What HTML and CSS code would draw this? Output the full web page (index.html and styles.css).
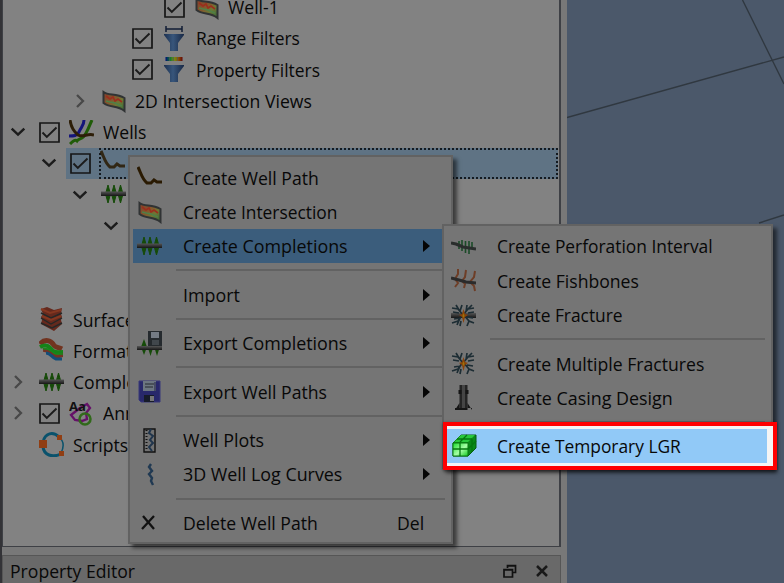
FILE: index.html
```html
<!DOCTYPE html>
<html lang="en">
<head>
<meta charset="utf-8">
<title>Well path menu</title>
<link rel="stylesheet" href="styles.css">
</head>
<body>
<svg class="defs" width="0" height="0">
  <defs>
    <linearGradient id="fun"><stop offset="0" stop-color="#1c3050"/><stop offset=".45" stop-color="#38567b"/><stop offset="1" stop-color="#172744"/></linearGradient>
    <linearGradient id="rain"><stop offset="0" stop-color="#000d77"/><stop offset=".25" stop-color="#087038"/><stop offset=".5" stop-color="#739014"/><stop offset=".75" stop-color="#8b5207"/><stop offset="1" stop-color="#650505"/></linearGradient>
    <linearGradient id="heat" x2="1" y2="1"><stop offset="0" stop-color="#80402c"/><stop offset=".4" stop-color="#85552c"/><stop offset=".65" stop-color="#6f7734"/><stop offset="1" stop-color="#32683a"/></linearGradient>
    <linearGradient id="pipe" x2="0" y2="1"><stop offset="0" stop-color="#555"/><stop offset="1" stop-color="#161616"/></linearGradient>
    <linearGradient id="cube" x2="1" y2="1"><stop offset="0" stop-color="#19dc2d"/><stop offset=".55" stop-color="#a5ffa5"/><stop offset="1" stop-color="#12c91f"/></linearGradient>
    <symbol id="down" viewBox="0 0 20 20"><path d="M3.700 6.700 10 12.600l6.300-5.900" fill="none" stroke="#1c1c1c" stroke-width="2.500"/></symbol>
    <symbol id="right" viewBox="0 0 20 20"><path d="m7 4 6 6-6 6" fill="none" stroke="#484848" stroke-width="2.300"/></symbol>
    <symbol id="check" viewBox="0 0 21 21"><path d="M1 1h19v19H1z" fill="none" stroke="#161616" stroke-width="1.700"/><path d="m3.500 10.500 4.300 4.500 9.700-9.500" fill="none" stroke="#1b1b1b" stroke-width="1.900"/></symbol>
    <symbol id="section" viewBox="0 0 25 25"><path d="M2.500 4c5 4 12 1 21 6v13C16 17 9 20 2.500 15z" fill="url(#heat)" stroke="#303334" stroke-width="2"/><path d="m5 8 4 3 3-2 2 4 3-2 4 3" fill="none" stroke="#9b2e1d" stroke-width="1.600"/><path d="m5 13 4 1 5 1 7 3" fill="none" stroke="#4e8047" stroke-width="1.500"/></symbol>
    <symbol id="range" viewBox="0 0 25 25"><path d="M4 0v6M20 0v6M4 3h16" stroke="#111c35" stroke-width="1.500" fill="none"/><path d="M2 8h20v1l-6 8v8H8v-8L2 9z" fill="url(#fun)"/></symbol>
    <symbol id="property" viewBox="0 0 25 25"><path d="M3.500 0h17v4h-17z" fill="url(#rain)"/><path d="M7.500 0v4M11.500 0v4M15.500 0v4" stroke="#555" stroke-width=".7"/><path d="M2 8h20v1l-6 8v8H8v-8L2 9z" fill="url(#fun)"/></symbol>
    <symbol id="wells" viewBox="0 0 25 25"><g fill="none" stroke-width="3"><path d="M15 0c0 6-3 7-5 12-2 4-5 4-10 4" stroke="#15157b"/><path d="M23 0c-2 4-3 8-6 13-3 7-7 5-9 8-2-2-5 1-7 3" stroke="#205c08"/><path d="M1 0c1 7 3 11 8 15 5 3 9-2 16 0" stroke="#2d1e08"/></g></symbol>
    <symbol id="path" viewBox="0 0 25 25"><path d="M1 2c3 6 4 12 9 16h4l3-3 3 2h5" fill="none" stroke="#2a1a02" stroke-width="3"/></symbol>
    <symbol id="comp" viewBox="0 0 25 25"><path d="m7 3 2.500 9L7 21l-2.500-9zM13 3l2.500 9-2.500 9-2.500-9zM19.500 3l2.500 9-2.500 9-2.500-9z" fill="#164b09" stroke="#164b09"/><path d="M0 9.500h25v4.500H0z" fill="url(#pipe)"/></symbol>
    <symbol id="surface" viewBox="0 0 25 25"><path d="m2 2 6-2 7 3 8-2-1 6 1 3-1 3 1 4-8 7-13-7 1-4-1-3 2-3z" fill="#65291d"/><path d="m2 6 10 5 11-5M2 11l10 6 11-6M2 16l11 5 10-5" fill="none" stroke="#262827" stroke-width="1.400"/><path d="m2 2 9 4 11-3M3 9l9 4 10-4" fill="none" stroke="#843720" stroke-width="2"/></symbol>
    <symbol id="formation" viewBox="0 0 25 25"><g fill="none" stroke-width="5"><path d="M1 6c5-6 11-3 13 0 2 4 5 3 9 5" stroke="#71331f"/><path d="M1 9c8-4 10 1 13 4 3 2 6 1 10 1" stroke="#158419" stroke-width="4"/><path d="M4 12c8-1 8 5 13 6 3 1 5-1 7-1" stroke="#713424" stroke-width="4"/><path d="M7 15c5 0 6 5 10 6h6" stroke="#124d79" stroke-width="3"/><path d="M4 11c7-2 9 4 13 5h7" stroke="#168a1b" stroke-width="1.700"/></g></symbol>
    <symbol id="annot" viewBox="0 0 25 25"><path d="m11 7 7-4 3 4-4 5 1 6-5 2-7-1-4-5z" fill="none" stroke="#651168" stroke-width="2.300"/><circle cx="16" cy="18" r="5.500" fill="none" stroke="#31691a" stroke-width="2.500"/><text x="0" y="10" class="aa">Aa</text></symbol>
    <symbol id="scripts" viewBox="0 0 25 25"><g fill="none" stroke="#0a526c" stroke-width="3"><path d="M4 10C6 1 14-1 20 5"/><path d="M4 15c1 8 9 11 18 7"/><path d="M20 5c5 4 5 10 2 16" stroke-width="1.500"/></g><path d="M0 8h8v8H0zM18 3h5v5h-5zM20 19h5v5h-5z" fill="#903e13"/></symbol>
    <symbol id="floppy" viewBox="0 0 25 25"><path d="M2 2h21v21H4l-2-2z" fill="#28286b" stroke="#38387b"/><path d="M6 2h13v10H6z" fill="#6c7681"/><path d="M8 5h9M8 8h8" stroke="#3d434b" stroke-width="1.400"/><path d="M7 16h10v7H7z" fill="#161b29"/><path d="M13 17h4v5h-4z" fill="#777"/><path d="M18 3v9" stroke="#202048"/></symbol>
    <symbol id="export" viewBox="0 0 25 25"><path d="m7 8 3 8-3 8-3-8zM11 17h5l-2.500 8zM17.500 17h5L20 25z" fill="#164b09"/><path d="M0 15h25v4H0z" fill="url(#pipe)"/><path d="M11 0h14v15H11z" fill="#252a2e"/><path d="M14 1h8v6h-8z" fill="#747b84"/><path d="M15 9h7v5h-7z" fill="#41474c"/></symbol>
    <symbol id="plots" viewBox="0 0 25 25"><path d="M7 1h11v23H7z" fill="#717171" stroke="#111" stroke-width="1.400"/><path d="M9.500 2v21" stroke="#111" stroke-width="2" stroke-dasharray="1 2"/><path d="m14 1-2 4 4 3-3 4 3 3-4 4 3 4" fill="none" stroke="#20354c" stroke-width="2"/></symbol>
    <symbol id="curve" viewBox="0 0 25 25"><path d="m14 2-2 3 3 4-3 3 3 4-1 3 2 4" fill="none" stroke="#203952" stroke-width="2.400"/></symbol>
    <symbol id="delete" viewBox="0 0 25 25"><path d="m6 6 11 13M17 6 5 19" stroke="#111" stroke-width="2.300"/></symbol>
    <symbol id="perf" viewBox="0 0 25 25"><path d="M8 7v8M11 6v11M14.500 7v12M18 7v13M21 8v5" stroke="#1b4b28" stroke-width="1.600"/><path d="m0 9 5 1 7 3 13 2" fill="none" stroke="#292d2c" stroke-width="3"/></symbol>
    <symbol id="fish" viewBox="0 0 25 25"><path d="M7 1v5l-3 5 3 4-3 4M15 2l-1 7-3 4 3 3-1 4M24 3l-1 6-4 5 4 4 1 5" fill="none" stroke="#6e3e27" stroke-width="2"/><path d="m0 10 8 2 7 2 10 1" fill="none" stroke="#2b2b2b" stroke-width="3"/></symbol>
    <symbol id="multi" viewBox="0 0 25 25"><path d="m1 5 6 1 5 6 5-6 6-1M5 2l3 5M11 2l-2 6M16 2l-1 7M21 2l-4 4M2 9l6 1M23 9l-6 1M1 20l6-2 5-7 6 7 5 2M3 16l6-1-3 7M18 18l-2 5M22 15l-6-1M10 18l-1 5" fill="none" stroke="#1d2d34" stroke-width="1.700"/><path d="m12.500 6 1.500 5 3 1-3 2-1.500 6-1.500-6-3-2 3-1z" fill="#8a4208"/><path d="m12.500 10 1 3-1 2-1-2z" fill="#99750c"/></symbol>
    <symbol id="frac" viewBox="0 0 25 25"><path d="M0 10h25v5H0z" fill="url(#pipe)"/><use href="#multi"/></symbol>
    <symbol id="casing" viewBox="0 0 25 25"><path d="M8.500 0h8v23h-8z" fill="#242424"/><path d="M11 0h3v25h-3z" fill="#454545"/><path d="M7.500 5h3v4h-3zM14.500 5h3v4h-3zM8.500 18v7H4zM16.500 18v7H21zM4 23h17v2H4z" fill="#151515"/></symbol>
    <symbol id="lgr" viewBox="0 0 25 25"><path d="m1 10 8-8h15v13l-8 8H1z" fill="#0a8a18" stroke="#075d10"/><path d="M1 10h15v13H1z" fill="url(#cube)" stroke="#087812"/><path d="m2 9 7-7h14l-7 7z" fill="#28c83b"/><path d="M1 16h15M8 10v13M5 6h15M8 9l7-7M20 6v13M16 16l8-8" fill="none" stroke="#06780f" stroke-width="1.300"/></symbol>
  </defs>
</svg>

<main class="app">
  <section class="dock">
    <div class="tree">
      <div class="row d4"><i class="exp"></i><svg class="cb"><use href="#check"/></svg><svg class="ic"><use href="#section"/></svg><span>Well-1</span></div>
      <div class="row d3"><i class="exp"></i><svg class="cb"><use href="#check"/></svg><svg class="ic"><use href="#range"/></svg><span class="tight">Range Filters</span></div>
      <div class="row d3"><i class="exp"></i><svg class="cb"><use href="#check"/></svg><svg class="ic"><use href="#property"/></svg><span class="tight">Property Filters</span></div>
      <div class="row d2"><svg class="exp"><use href="#right"/></svg><svg class="ic"><use href="#section"/></svg><span>2D Intersection Views</span></div>
      <div class="row d0"><svg class="exp"><use href="#down"/></svg><svg class="cb"><use href="#check"/></svg><svg class="ic"><use href="#wells"/></svg><span>Wells</span></div>
      <div class="row d1"><svg class="exp"><use href="#down"/></svg><div class="selected"><svg class="cb"><use href="#check"/></svg><div class="focus"><svg class="ic"><use href="#path"/></svg></div></div></div>
      <div class="row d2"><svg class="exp"><use href="#down"/></svg><svg class="ic"><use href="#comp"/></svg></div>
      <div class="row d3"><svg class="exp"><use href="#down"/></svg></div>
      <div class="row"></div>
      <div class="row"></div>
      <div class="row d0"><i class="exp"></i><svg class="ic"><use href="#surface"/></svg><span>Surfaces</span></div>
      <div class="row d0"><i class="exp"></i><svg class="ic"><use href="#formation"/></svg><span>Formations</span></div>
      <div class="row d0"><svg class="exp"><use href="#right"/></svg><svg class="ic"><use href="#comp"/></svg><span>Completions</span></div>
      <div class="row d0"><svg class="exp"><use href="#right"/></svg><svg class="cb"><use href="#check"/></svg><svg class="ic"><use href="#annot"/></svg><span>Annotations</span></div>
      <div class="row d0"><i class="exp"></i><svg class="ic"><use href="#scripts"/></svg><span>Scripts</span></div>
    </div>
    <div class="titlebar"><span>Property Editor</span>
      <svg class="tool" viewBox="0 0 14 14"><path d="M4.500 4V1.500h8v7H10M4.500 2h8M1 5.500h8.500v7.500H1zM1 6h9" fill="none" stroke="#111" stroke-width="1.700"/></svg>
      <svg class="tool" viewBox="0 0 14 14"><path d="m2 2 10 10M12 2 2 12" stroke="#191919" stroke-width="2.500"/></svg>
    </div>
  </section>
  <svg class="view" viewBox="0 0 217 583"><path d="M0 117.500 217 57M175.500 0 217 84M192 223l25-8" fill="none" stroke="#303840" stroke-width="1.400"/></svg>
</main>

<nav class="menu primary">
  <div class="item"><svg class="ic"><use href="#path"/></svg><span>Create Well Path</span></div>
  <div class="item"><svg class="ic"><use href="#section"/></svg><span class="tight">Create Intersection</span></div>
  <div class="item active"><svg class="ic"><use href="#comp"/></svg><span class="loose">Create Completions</span><i class="arrow"></i></div>
  <hr>
  <div class="item"><i class="ic"></i><span class="loose">Import</span><i class="arrow"></i></div>
  <hr>
  <div class="item"><svg class="ic"><use href="#export"/></svg><span class="loose">Export Completions</span><i class="arrow"></i></div>
  <hr>
  <div class="item"><svg class="ic"><use href="#floppy"/></svg><span>Export Well Paths</span><i class="arrow"></i></div>
  <hr>
  <div class="item"><svg class="ic"><use href="#plots"/></svg><span class="loose">Well Plots</span><i class="arrow"></i></div>
  <div class="item"><svg class="ic"><use href="#curve"/></svg><span class="loose">3D Well Log Curves</span><i class="arrow"></i></div>
  <hr>
  <div class="item"><svg class="ic"><use href="#delete"/></svg><span>Delete Well Path</span><span class="key">Del</span></div>
</nav>

<nav class="menu sub">
  <div class="item"><svg class="ic"><use href="#perf"/></svg><span class="tight">Create Perforation Interval</span></div>
  <div class="item"><svg class="ic"><use href="#fish"/></svg><span>Create Fishbones</span></div>
  <div class="item"><svg class="ic"><use href="#frac"/></svg><span class="tight">Create Fracture</span></div>
  <hr>
  <div class="item"><svg class="ic"><use href="#multi"/></svg><span>Create Multiple Fractures</span></div>
  <div class="item"><svg class="ic"><use href="#casing"/></svg><span class="loose">Create Casing Design</span></div>
  <hr>
</nav>
<div class="callout"><div class="item"><svg class="ic"><use href="#lgr"/></svg><span class="tight">Create Temporary LGR</span></div></div>
</body>
</html>
```
FILE: styles.css
```css
* { box-sizing: border-box; }
body {
  margin: 0;
  width: 784px;
  height: 583px;
  overflow: hidden;
  position: relative;
  background: #787878;
  color: #080808;
  font: 19px/28px "Open Sans", "Noto Sans", sans-serif;
}
svg { display: block; flex: none; }
span { white-space: nowrap; transform: scaleX(.927); transform-origin: left; }
.tight { transform: scaleX(.914); }
.loose { transform: scaleX(.94); }
.defs { position: absolute; }
.aa { font: bold 13px "Open Sans", sans-serif; fill: #111; }
.app { display: flex; height: 583px; }
.dock {
  width: 567px;
  flex: none;
  border-left: 2px solid #333337;
  padding-right: 6px;
}
.tree {
  height: 547px;
  overflow: hidden;
  background: #828282;
  border: solid #3e4045;
  border-width: 0 2px 1px 1px;
}
.tree .row:first-child { margin-top: -8.600px; }
.row { display: flex; align-items: center; height: 31.250px; padding-left: 5px; }
.d1 { padding-left: 36px; }
.d2 { padding-left: 67px; }
.d3 { padding-left: 98px; }
.d4 { padding-left: 130px; }
.exp { width: 20px; height: 20px; margin-right: 11px; flex: none; }
.cb { width: 21px; height: 21px; margin-right: 9px; }
.ic { width: 25px; height: 25px; flex: none; }
.row > .ic { margin-right: 9px; }
.selected {
  display: flex;
  align-items: center;
  height: 31px;
  flex: 1;
  margin-left: -4px;
  margin-right: 1px;
  padding-left: 4px;
  background: #5f7384;
}
.selected .cb { margin-right: 8px; }
.focus { height: 31px; flex: 1; border: 2px dotted #141a20; }
.focus .ic { margin-top: -1px; margin-left: -1px; opacity: .85; }
.titlebar {
  display: flex;
  align-items: center;
  gap: 18px;
  height: 40px;
  margin-top: 8px;
  padding: 0 11px 8px 7px;
  background: #696969;
  border: 1px solid #565656;
}
.titlebar span { flex: 1; }
.tool { width: 14px; height: 14px; }
.view { width: 217px; height: 583px; background: #4b586a; }
.menu {
  position: absolute;
  background: #757575;
  border: 2px solid #626262;
  box-shadow: 4px 4px 4px rgba(0, 0, 0, .55);
}
.primary { left: 128px; top: 155px; width: 325px; height: 389px; padding: 3.500px 3px; }
.sub { left: 442px; top: 224px; width: 331px; height: 245px; padding: 3.300px 3px; }
.item { display: flex; align-items: center; height: 34.300px; padding: 0 10px 0 5px; }
.item .ic { margin-right: 20px; }
.primary .ic { margin-left: -1px; margin-right: 21px; }
.sub .ic { margin-left: -1px; margin-right: 21px; }
.item span { flex: 1; }
.item .key { flex: none; width: 36px; margin-right: 5px; }
.active { background: #3b5d7c; }
.arrow { border: solid transparent; border-width: 6px 0 6px 7px; border-left-color: #050505; margin-right: 8px; }
hr { height: 2px; margin: 6px 3px 6.200px 43px; border: 0; background: #626262; }
.callout {
  position: absolute;
  left: 443px;
  top: 422px;
  width: 334px;
  height: 48px;
  padding: 2.700px 6px 0 0;
  border: 4px solid #f00;
  background: #f4f4f4;
  box-shadow: 0 1px 3px rgba(0, 0, 0, .5);
}
.callout .item { padding-left: 5px; background: #91c9f7; }
```
